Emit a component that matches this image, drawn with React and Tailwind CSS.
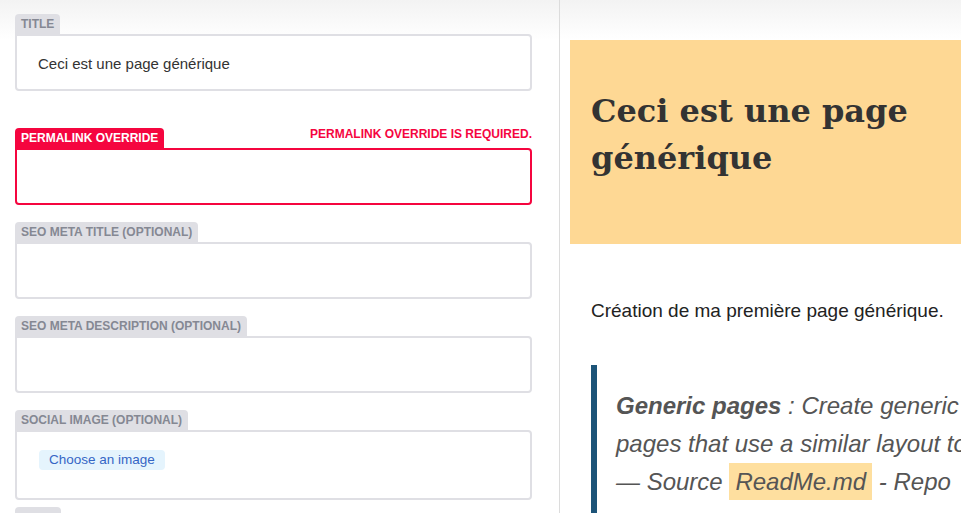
import React from 'react';

const Field = ({ label, error, className = '', children, tall = false }) => {
  const invalid = Boolean(error);
  return (
    <div className={className}>
      <div className="flex items-end justify-between h-5">
        <span
          className={
            'h-5 px-[6px] rounded-t-[4px] text-[12px] font-bold uppercase leading-5 ' +
            (invalid ? 'bg-[#f5053f] text-white' : 'bg-[#dfdfe4] text-[#858893]')
          }
        >
          {label}
        </span>
        {invalid && (
          <span className="mb-[5px] text-[12px] font-bold uppercase text-[#f5053f]">
            {error}
          </span>
        )}
      </div>
      <div
        className={
          'rounded-b-[4px] rounded-tr-[4px] border-2 bg-white flex ' +
          (invalid ? 'border-[#f5053f]' : 'border-[#dfdfe4]') +
          (tall ? ' h-[70px] items-start pt-[18px]' : ' h-[57px] items-center')
        }
      >
        {children}
      </div>
    </div>
  );
};

export default function App() {
  return (
    <div
      className="flex w-[961px] h-[513px] overflow-hidden bg-gradient-to-b from-[#f3f3f3] via-white to-white"
      style={{ backgroundSize: '100% 80px', backgroundRepeat: 'no-repeat', fontFamily: '"Liberation Sans", Arial, sans-serif' }}
    >
      {/* Editor panel */}
      <div className="w-[560px] shrink-0 border-r border-[#dcdcdc] pl-[15px] pr-[27px] pt-[14px]">
        <Field label="Title">
          <span className="pl-[21px] pt-[3px] text-[15px] text-[#333]">Ceci est une page générique</span>
        </Field>
        <Field label="Permalink override" error="Permalink override is required." className="mt-[37px]" />
        <Field label="SEO meta title (optional)" className="mt-[17px]" />
        <Field label="SEO meta description (optional)" className="mt-[17px]" />
        <Field label="Social image (optional)" className="mt-[17px]" tall>
          <button className="ml-[22px] h-5 px-[10px] rounded-[4px] bg-[#e5f4fd] text-[13.5px] text-[#3566c5] leading-5">
            Choose an image
          </button>
        </Field>
        <div className="mt-[7px] h-5 w-[46px] rounded-t-[4px] bg-[#dfdfe4]" />
      </div>

      {/* Preview panel */}
      <div className="flex-1 min-w-0 overflow-hidden pl-[10px] pt-[40px]">
        <div className="w-[600px] h-[204px] bg-[#fed894] pl-[21px] pt-[48px]">
          <h1
            className="text-[32px] font-bold leading-[47px] text-[#333]"
            style={{ fontFamily: '"DejaVu Serif", Georgia, serif' }}
          >
            Ceci est une page
            <br />
            générique
          </h1>
        </div>
        <p className="mt-[55px] pl-[21px] text-[19px] text-[#222] leading-6">
          Création de ma première page générique.
        </p>
        <blockquote className="mt-[42px] ml-[21px] border-l-[6px] border-[#1d5478] pl-[19px] pt-[22px] pb-4 text-[24px] italic leading-[38px] text-[#555] whitespace-nowrap">
          <span className="block">
            <strong className="font-bold">Generic pages</strong> : Create generic
          </span>
          <span className="block">pages that use a similar layout to</span>
          <span className="block">
            — Source <span className="bg-[#fedf9f] px-[6px] py-[5px]">ReadMe.md</span> - Repo
          </span>
        </blockquote>
      </div>
    </div>
  );
}
